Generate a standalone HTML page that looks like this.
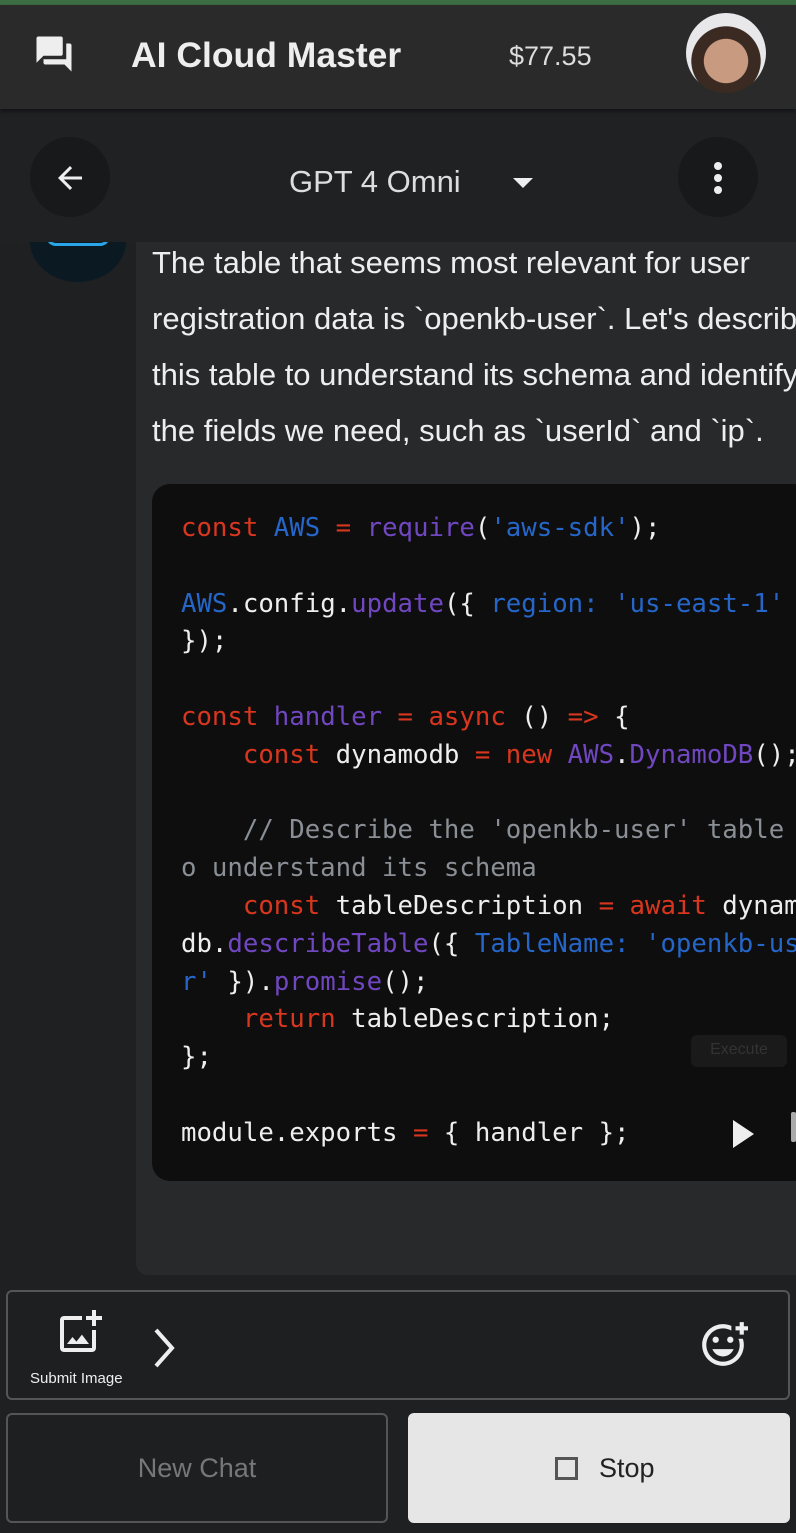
<!DOCTYPE html>
<html><head><meta charset="utf-8"><style>
*{margin:0;padding:0;box-sizing:border-box}
body{width:796px;height:1533px;overflow:hidden;background:#1e2022;font-family:"Liberation Sans",sans-serif;position:relative}
.top{position:absolute;left:0;top:0;width:796px;height:5px;background:#3c6e44;z-index:5}
.hdr{position:absolute;left:0;top:5px;width:796px;height:104px;background:#2a2a2a;box-shadow:0 2px 4px rgba(0,0,0,.5);z-index:5}
.title{position:absolute;left:131px;top:30px;font-size:35.5px;font-weight:bold;color:#eee}
.price{position:absolute;left:509px;top:36px;font-size:27px;color:#ddd}
.av{position:absolute;left:686px;top:8px;width:80px;height:80px;border-radius:50%;background:radial-gradient(circle at 50% 60%,#c89a80 0 35%,#3a2a22 36% 55%,#e8e8ea 56%)}
.bar{position:absolute;left:0;top:109px;width:796px;height:133px;background:#1f2123;z-index:3}
.cbtn{position:absolute;width:80px;height:80px;border-radius:50%;background:#18191a;top:137px;z-index:4}
.model{position:absolute;left:289px;top:164px;font-size:31px;color:#ddd;z-index:4}
.msgbg{position:absolute;left:136px;top:242px;width:660px;height:1033px;background:#27292a;border-radius:0 0 0 12px}
.bot{position:absolute;left:30px;top:200px;width:96px;height:82px;border-radius:50%;background:#0b1a22;overflow:hidden}
.p{position:absolute;left:152px;top:235px;font-size:31px;line-height:56px;color:#eee;white-space:nowrap}
.code{position:absolute;left:152px;top:484px;width:660px;height:697px;background:#0e0e0e;border-radius:18px}
pre{position:absolute;left:181px;top:510px;font-family:"DejaVu Sans Mono","Liberation Mono",monospace;font-size:25.7px;line-height:37.8px;color:#eee;white-space:pre}
.k{color:#d8361e}.b{color:#2566c8}.u{color:#7047c0}.c{color:#8a8f96}
.exec{position:absolute;left:691px;top:1035px;width:96px;height:32px;background:#1a1a1a;border-radius:6px;color:#333;font-size:16px;text-align:center;line-height:30px}
.inp{position:absolute;left:6px;top:1290px;width:784px;height:110px;border:2px solid #555;border-radius:6px;background:#1d1f21}
.nc{position:absolute;left:6px;top:1413px;width:382px;height:110px;border:2px solid #555;border-radius:6px;background:#1d1f21;color:#777;font-size:27px;text-align:center;line-height:106px}
.st{position:absolute;left:408px;top:1413px;width:382px;height:110px;border-radius:6px;background:#e6e6e6;color:#222;font-size:27px;line-height:110px}
</style></head><body>
<div class="top"></div>
<div class="hdr">
<svg style="position:absolute;left:33px;top:28px" width="42" height="42" viewBox="0 0 24 24"><path fill="#eee" d="M21 6h-2v9H6v2c0 .55.45 1 1 1h11l4 4V7c0-.55-.45-1-1-1zm-4 6V3c0-.55-.45-1-1-1H3c-.55 0-1 .45-1 1v14l4-4h10c.55 0 1-.45 1-1z"/></svg>
<div class="title">AI Cloud Master</div>
<div class="price">$77.55</div>
<div class="av"></div>
</div>
<div class="msgbg"></div>
<div class="bot"><div style="position:absolute;left:16px;top:30px;width:64px;height:16px;border:3px solid #2aa6e8;border-top:none;border-radius:0 0 10px 10px"></div></div>
<div class="bar"></div>
<div class="cbtn" style="left:30px"></div>
<div class="cbtn" style="left:678px"></div>
<svg style="position:absolute;left:52px;top:160px;z-index:5" width="36" height="36" viewBox="0 0 24 24"><path fill="#eee" d="M20 11H7.83l5.59-5.59L12 4l-8 8 8 8 1.41-1.41L7.83 13H20v-2z"/></svg>
<div class="model">GPT 4 Omni</div>
<div style="position:absolute;left:513px;top:178px;border-left:10px solid transparent;border-right:10px solid transparent;border-top:10px solid #eee;z-index:5"></div>
<svg style="position:absolute;left:708px;top:160px;z-index:5" width="20" height="36" viewBox="0 0 20 36"><circle cx="10" cy="6" r="4" fill="#eee"/><circle cx="10" cy="18" r="4" fill="#eee"/><circle cx="10" cy="30" r="4" fill="#eee"/></svg>
<div class="p">The table that seems most relevant for user<br>registration data is `openkb-user`. Let's describe<br>this table to understand its schema and identify<br>the fields we need, such as `userId` and `ip`.</div>
<div class="code"></div>
<pre><span class="k">const</span> <span class="b">AWS</span> <span class="k">=</span> <span class="u">require</span>(<span class="b">'aws-sdk'</span>);

<span class="b">AWS</span>.config.<span class="u">update</span>({ <span class="b">region:</span> <span class="b">'us-east-1'</span>
});

<span class="k">const</span> <span class="u">handler</span> <span class="k">=</span> <span class="k">async</span> () <span class="k">=&gt;</span> {
    <span class="k">const</span> dynamodb <span class="k">=</span> <span class="k">new</span> <span class="u">AWS</span>.<span class="u">DynamoDB</span>();

    <span class="c">// Describe the 'openkb-user' table t</span>
<span class="c">o understand its schema</span>
    <span class="k">const</span> tableDescription <span class="k">=</span> <span class="k">await</span> dynamo
db.<span class="u">describeTable</span>({ <span class="b">TableName:</span> <span class="b">'openkb-use</span>
<span class="b">r'</span> }).<span class="u">promise</span>();
    <span class="k">return</span> tableDescription;
};

module.exports <span class="k">=</span> { handler };</pre>
<div class="exec">Execute</div>
<div style="position:absolute;left:733px;top:1120px;border-top:14px solid transparent;border-bottom:14px solid transparent;border-left:21px solid #eee"></div>
<div style="position:absolute;left:791px;top:1112px;width:5px;height:30px;background:#aaa;border-radius:2px"></div>
<div class="inp">
<svg style="position:absolute;left:48px;top:16px" width="48" height="48" viewBox="0 0 24 24"><path fill="#eee" d="M18 20H4V6h9V4H4c-1.1 0-2 .9-2 2v14c0 1.1.9 2 2 2h14c1.1 0 2-.9 2-2v-9h-2v9zm-7.79-3.17l-1.96-2.36L5.5 18h11l-3.54-4.71zM20 4V1h-2v3h-3c.01.01 0 2 0 2h3v2.99c.01.01 2 0 2 0V6h3V4h-3z"/></svg>
<div style="position:absolute;left:22px;top:78px;font-size:15px;color:#eee">Submit Image</div>
<svg style="position:absolute;left:142px;top:34px" width="30" height="44" viewBox="0 0 30 44"><path d="M6 4l16 18L6 40" stroke="#eee" stroke-width="4" fill="none"/></svg>
<svg style="position:absolute;left:690px;top:28px" width="50" height="50" viewBox="0 0 24 24"><path fill="#eee" d="M7 9.5C7 8.670 7.670 8 8.5 8s1.5.67 1.5 1.5S9.33 11 8.5 11 7 10.33 7 9.5zm5 8c2.33 0 4.31-1.46 5.11-3.5H6.89c.8 2.04 2.78 3.5 5.11 3.5zm3.5-6.5c.83 0 1.5-.67 1.5-1.5S16.33 8 15.5 8 14 8.67 14 9.5s.67 1.5 1.5 1.5zM22 1h-2v2h-2v2h2v2h2V5h2V3h-2V1zm-2 11c0 4.420-3.58 8-8 8s-8-3.58-8-8 3.58-8 8-8c1.46 0 2.82.4 4 1.08V2.84C14.77 2.3 13.42 2 12 2 6.47 2 2 6.5 2 12s4.47 10 10 10c5.52 0 10-4.5 10-10 0-1.05-.17-2.05-.47-3h-2.13c.38.93.6 1.94.6 3z"/></svg>
</div>
<div class="nc">New Chat</div>
<div class="st"><span style="position:absolute;left:147px;top:44px;width:23px;height:23px;border:3px solid #555"></span><span style="position:absolute;left:191px">Stop</span></div>
</body></html>
